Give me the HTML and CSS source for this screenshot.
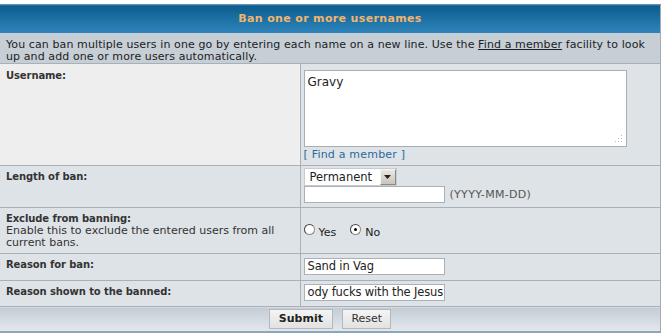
FILE: index.html
```html
<!DOCTYPE html>
<html lang="en">

<head>
    <meta charset="utf-8">
    <title>Ban one or more usernames</title>
    <link rel="stylesheet" href="styles.css">
</head>

<body>
    <div class="cutoff"></div>

    <table class="tborder" cellspacing="0" cellpadding="0">
        <colgroup>
            <col class="col-label">
            <col class="col-field">
        </colgroup>
        <tr class="row-cat">
            <td class="tcat" colspan="2">Ban one or more usernames</td>
        </tr>
        <tr class="row-head">
            <td class="thead" colspan="2">You can ban multiple users in one go by entering each name on a new line. Use the <a href="#">Find a member</a> facility to look up and add one or more users automatically.</td>
        </tr>
        <!-- username -->
        <tr class="row-user">
            <td class="alt1 label"><b>Username:</b></td>
            <td class="alt2 field">
                <div class="textarea">Gravy<span class="grip"></span></div>
                <div class="find">[ <a href="#">Find a member</a> ]</div>
            </td>
        </tr>
        <!-- length -->
        <tr class="row-length">
            <td class="alt2 label"><b>Length of ban:</b></td>
            <td class="alt2 field">
                <div class="select">
                    <span class="select-value">Permanent</span>
                    <span class="select-btn">
                        <svg width="7" height="4" viewBox="0 0 7 4"><path d="M0 0h7L3.5 4z" fill="#222"/></svg>
                    </span>
                </div>
                <div class="inline">
                    <div class="input wide"></div>
                    <span class="hint">(YYYY-MM-DD)</span>
                </div>
            </td>
        </tr>
        <!-- exclude -->
        <tr class="row-exclude">
            <td class="alt2 label">
                <b>Exclude from banning:</b><br>
                <span class="desc">Enable this to exclude the entered users from all current bans.</span>
            </td>
            <td class="alt2 field">
                <div class="radios">
                    <label><span class="radio"></span><span class="rtext">Yes</span></label>
                    <label><span class="radio checked"></span><span class="rtext">No</span></label>
                </div>
            </td>
        </tr>
        <tr class="row-reason">
            <td class="alt2 label"><b>Reason for ban:</b></td>
            <td class="alt2 field"><div class="input wide">Sand in Vag</div></td>
        </tr>
        <tr class="row-shown">
            <td class="alt2 label"><b>Reason shown to the banned:</b></td>
            <td class="alt2 field"><div class="input wide">ody fucks with the Jesus</div></td>
        </tr>
        <tr class="row-foot">
            <td class="tfoot" colspan="2">
                <span class="button bold">Submit</span>
                <span class="button reset">Reset</span>
            </td>
        </tr>
    </table>
</body>

</html>
```

FILE: styles.css
```css
body {
    margin: 0;
    background-color: #ffffff;
    font-family: "DejaVu Sans", Verdana, sans-serif;
    font-size: 11px;
    color: #222222;
}

.cutoff {
    height: 4px;
}

.tborder {
    width: 661px;
    border-collapse: collapse;
    table-layout: fixed;
    border-right: 1px solid #a3aab2;
    border-bottom: 2px solid #8fa6ba;
}

.col-label {
    width: 300px;
}

.tborder td {
    padding: 0;
    vertical-align: top;
    box-sizing: border-box;
}

/* blue title bar */
.tcat {
    height: 28px;
    border-top: 1px solid #6d8ea6;
    background: linear-gradient(#0b5c8c, #2f86bc);
    color: #f2b46c;
    font-weight: bold;
    font-size: 11px;
    letter-spacing: 0.35px;
    text-align: center;
    vertical-align: middle !important;
}

.thead {
    height: 31px;
    background-color: #c6ced6;
    padding: 6px 5px 0 6px !important;
    line-height: 12px;
    letter-spacing: 0.1px;
    border-bottom: 1px solid #a9b0b8;
}

a {
    color: #222222;
}

.alt1 {
    background-color: #eeeeee;
}

.alt2 {
    background-color: #dee3e7;
}

.label {
    padding: 5px 5px 0 6px !important;
    border-right: 1px solid #a9b0b8;
    border-bottom: 1px solid #a9b0b8;
    line-height: 12px;
    color: #333333;
}

.label b {
    font-size: 10px;
    letter-spacing: -0.1px;
    color: #333333;
}

.desc {
    display: block;
}

.field {
    padding: 6px 3px 0 3px !important;
    border-bottom: 1px solid #a9b0b8;
}

.row-user td { height: 102px; padding-top: 6px !important; }
.row-length td { height: 42px; }
.row-exclude td { height: 46px; }
.row-reason td { height: 27px; }
.row-shown td { height: 26px; }

.textarea {
    position: relative;
    width: 323px;
    height: 77px;
    background-color: #ffffff;
    border: 1px solid #a8aeb5;
    padding: 4px 3px;
    box-sizing: border-box;
    font-size: 12px;
}

/* resize grip dots */
.grip {
    position: absolute;
    right: 3px;
    bottom: 3px;
    width: 9px;
    height: 9px;
    background:
        radial-gradient(circle, #aab0b6 0.8px, transparent 1px) 0 0 / 3px 3px;
    clip-path: polygon(100% 0, 100% 100%, 0 100%);
}

.find {
    margin-top: 1px;
    font-size: 11px;
    color: #2a6a9a;
    letter-spacing: 0.2px;
}

.find a {
    color: #2a6a9a;
    text-decoration: none;
}

.row-length .field {
    padding-top: 2px !important;
}

.select {
    display: flex;
    align-items: center;
    width: 93px;
    height: 18px;
    background-color: #ffffff;
    border: 1px solid #c8ccd0;
    box-sizing: border-box;
    font-size: 11.5px;
}

.select-value {
    flex: 1;
    padding-left: 5px;
}

.select-btn {
    display: flex;
    align-items: center;
    justify-content: center;
    width: 16px;
    height: 16px;
    background: linear-gradient(#ebe8e1, #c9c5bc);
    border: 1px solid #f5f5f5;
    border-right-color: #8c8a84;
    border-bottom-color: #8c8a84;
    box-sizing: border-box;
}

.inline {
    display: flex;
    align-items: center;
    gap: 5px;
}

.input {
    height: 17px;
    background-color: #ffffff;
    border: 1px solid #aab1b8;
    box-sizing: border-box;
    font-size: 11.5px;
    letter-spacing: -0.15px;
    line-height: 15px;
    padding-left: 3px;
    white-space: nowrap;
    overflow: hidden;
}

.input.wide {
    width: 141px;
}

.hint {
    color: #555555;
    font-size: 11px;
    letter-spacing: 0.3px;
}

.row-exclude .field {
    padding-top: 16px !important;
}

.radios {
    display: flex;
    gap: 14px;
}

.radios label {
    display: flex;
    align-items: flex-start;
    gap: 4px;
}

.radio {
    position: relative;
    width: 11px;
    height: 11px;
    border-radius: 50%;
    background-color: #ffffff;
    border: 1px solid #8a8a8a;
    border-top-color: #444444;
    border-left-color: #444444;
    box-sizing: border-box;
}

.radio.checked::after {
    content: "";
    position: absolute;
    left: 3px;
    top: 3px;
    width: 3px;
    height: 3px;
    border-radius: 50%;
    background-color: #000000;
}

.rtext {
    font-size: 11px;
    margin-top: 2px;
}

.row-reason .field {
    padding-top: 4px !important;
}

.row-shown .field {
    padding-top: 3px !important;
}

.tfoot {
    height: 25px;
    background: linear-gradient(#c3ccd5, #e3e8ec);
    text-align: center;
    vertical-align: middle !important;
}

.button {
    display: inline-block;
    height: 20px;
    line-height: 18px;
    padding: 0 9px;
    box-sizing: border-box;
    background: linear-gradient(#f4f4f4, #e2e2e2);
    border: 1px solid #b5b8bb;
    font-size: 11px;
    color: #333333;
    margin: 0 3px;
    vertical-align: middle;
}

.button.bold {
    font-weight: bold;
    color: #222222;
}

.button.reset {
    padding: 0 8px;
}
```
